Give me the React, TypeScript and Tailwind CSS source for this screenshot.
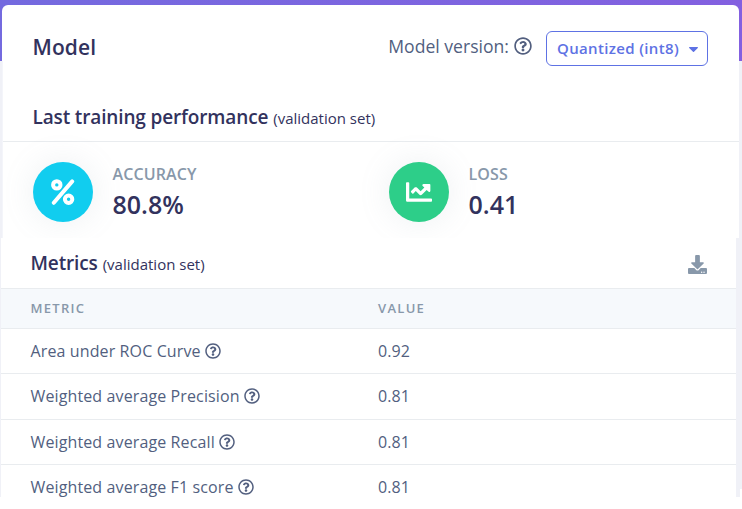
import { FaChartLine, FaDownload, FaRegQuestionCircle } from 'react-icons/fa';

const metrics = [
  { name: 'Area under ROC Curve', value: '0.92', row: 'h-[45px]' },
  { name: 'Weighted average Precision', value: '0.81', row: 'h-[46px]' },
  { name: 'Weighted average Recall', value: '0.81', row: 'h-[45px]' },
  { name: 'Weighted average F1 score', value: '0.81', row: 'h-[46px]' },
];

function PercentIcon() {
  return (
    <svg className="h-[26px] w-6" viewBox="0 0 24 26" fill="none" stroke="currentColor" strokeWidth="4">
      <circle cx="5.8" cy="5.9" r="3.7" />
      <circle cx="17.6" cy="20.2" r="3.7" />
      <path d="M21.2 2.4 2.8 23.8" strokeLinecap="round" />
    </svg>
  );
}

function Caret() {
  return (
    <svg className="ml-[10px] mt-[2px] h-[5px] w-[9px]" viewBox="0 0 9 5" fill="currentColor">
      <path d="M.6 0h7.8c.5 0 .8.6.4 1L5 4.7a.7.7 0 0 1-1 0L.2 1C-.2.6.1 0 .6 0Z" />
    </svg>
  );
}

function ModelCard() {
  return (
    <section className="ml-[2px] mr-[3px] h-[233px] overflow-hidden rounded-t-md bg-white">
      <header className="flex h-[84px] items-center pl-[30.5px] pr-[31px]">
        <h1 className="text-[21px] font-semibold leading-7 tracking-[0.1px] text-[#32325d]">Model</h1>
        <div className="ml-auto flex items-center text-[17.6px] text-[#525f7f]">
          <span className="-mt-px">Model version:</span>
          <FaRegQuestionCircle className="-mt-[2px] ml-[5px] size-[18px]" />
          <button className="ml-[14px] mt-[2px] flex h-[35px] w-[162px] items-center rounded-md border border-[#5e72e4] pl-[10px] text-[15px] font-semibold tracking-[0.35px] text-[#5e72e4]">
            Quantized (int8)
            <Caret />
          </button>
        </div>
      </header>
      <h2 className="flex h-[53px] items-baseline border-b border-[#e9ecef] pl-[30.5px] pt-[14px] text-[19px] font-semibold leading-7 tracking-[-0.14px] text-[#32325d]">
        Last training performance
        <small className="ml-[5px] text-[15px] font-normal tracking-normal">(validation set)</small>
      </h2>
      <div className="grid grid-cols-[356px_1fr] pl-[31px] pt-5">
        <div className="flex">
          <div className="flex size-[60px] items-center justify-center rounded-full bg-[#11cdef] text-white shadow-[0_0_32px_rgba(136,152,170,0.15)]">
            <PercentIcon />
          </div>
          <Stat label="ACCURACY" value="80.8%" />
        </div>
        <div className="flex">
          <div className="flex size-[60px] items-center justify-center rounded-full bg-[#2dce89] text-white shadow-[0_0_32px_rgba(136,152,170,0.15)]">
            <FaChartLine className="size-[26px]" />
          </div>
          <Stat label="LOSS" value="0.41" />
        </div>
      </div>
    </section>
  );
}

function Stat({ label, value }: { label: string; value: string }) {
  return (
    <div className="ml-[19.5px]">
      <div className="text-[16px] font-semibold leading-6 tracking-[0.1px] text-[#8898aa]">{label}</div>
      <div className="text-[25px] font-semibold leading-9 text-[#32325d]">{value}</div>
    </div>
  );
}

function MetricsTable() {
  return (
    <section className="ml-px mr-[6px] h-[259px] overflow-hidden bg-white">
      <header className="flex h-[51px] items-center border-b border-[#e9ecef] pl-[29.5px] pr-[29px]">
        <h2 className="flex items-baseline text-[19px] font-semibold tracking-[-0.14px] text-[#32325d]">
          Metrics
          <small className="ml-[5px] text-[15px] font-normal tracking-normal">(validation set)</small>
        </h2>
        <FaDownload className="ml-auto mt-[2px] size-[19px] text-[#8898aa]" />
      </header>
      <div className="grid h-10 grid-cols-[347.5px_1fr] items-center border-b border-[#e9ecef] bg-[#f6f9fc] pl-[29.5px] text-[13px] font-semibold tracking-[1.3px] text-[#8898aa]">
        <span>METRIC</span>
        <span>VALUE</span>
      </div>
      {metrics.map(({ name, value, row }) => (
        <div key={name} className={`${row} grid grid-cols-[347.5px_1fr] items-start border-b border-[#e9ecef] pl-[29.5px] text-[16px] leading-[44px] text-[#525f7f]`}>
          <span className="flex items-center tracking-[0.12px]">
            {name}
            <FaRegQuestionCircle className="ml-[4.5px] size-4" />
          </span>
          <span className="tracking-[0.1px]">{value}</span>
        </div>
      ))}
    </section>
  );
}

export default function App() {
  return (
    <main className="h-[509px] w-[742px] overflow-hidden bg-white font-['Open_Sans',sans-serif]">
      <div className="relative h-[497px] bg-[#f0f1f7] pt-[5px]">
        <div className="absolute inset-x-0 top-0 h-[61px] bg-gradient-to-r from-[#746adf] to-[#8360e0]" />
        <div className="absolute bottom-0 right-0 h-2 w-[2px] bg-white" />
        <div className="relative">
          <ModelCard />
          <MetricsTable />
        </div>
        <div className="absolute left-[2px] top-[61px] h-[177px] w-px bg-[#f4f5fa]" />
      </div>
    </main>
  );
}
